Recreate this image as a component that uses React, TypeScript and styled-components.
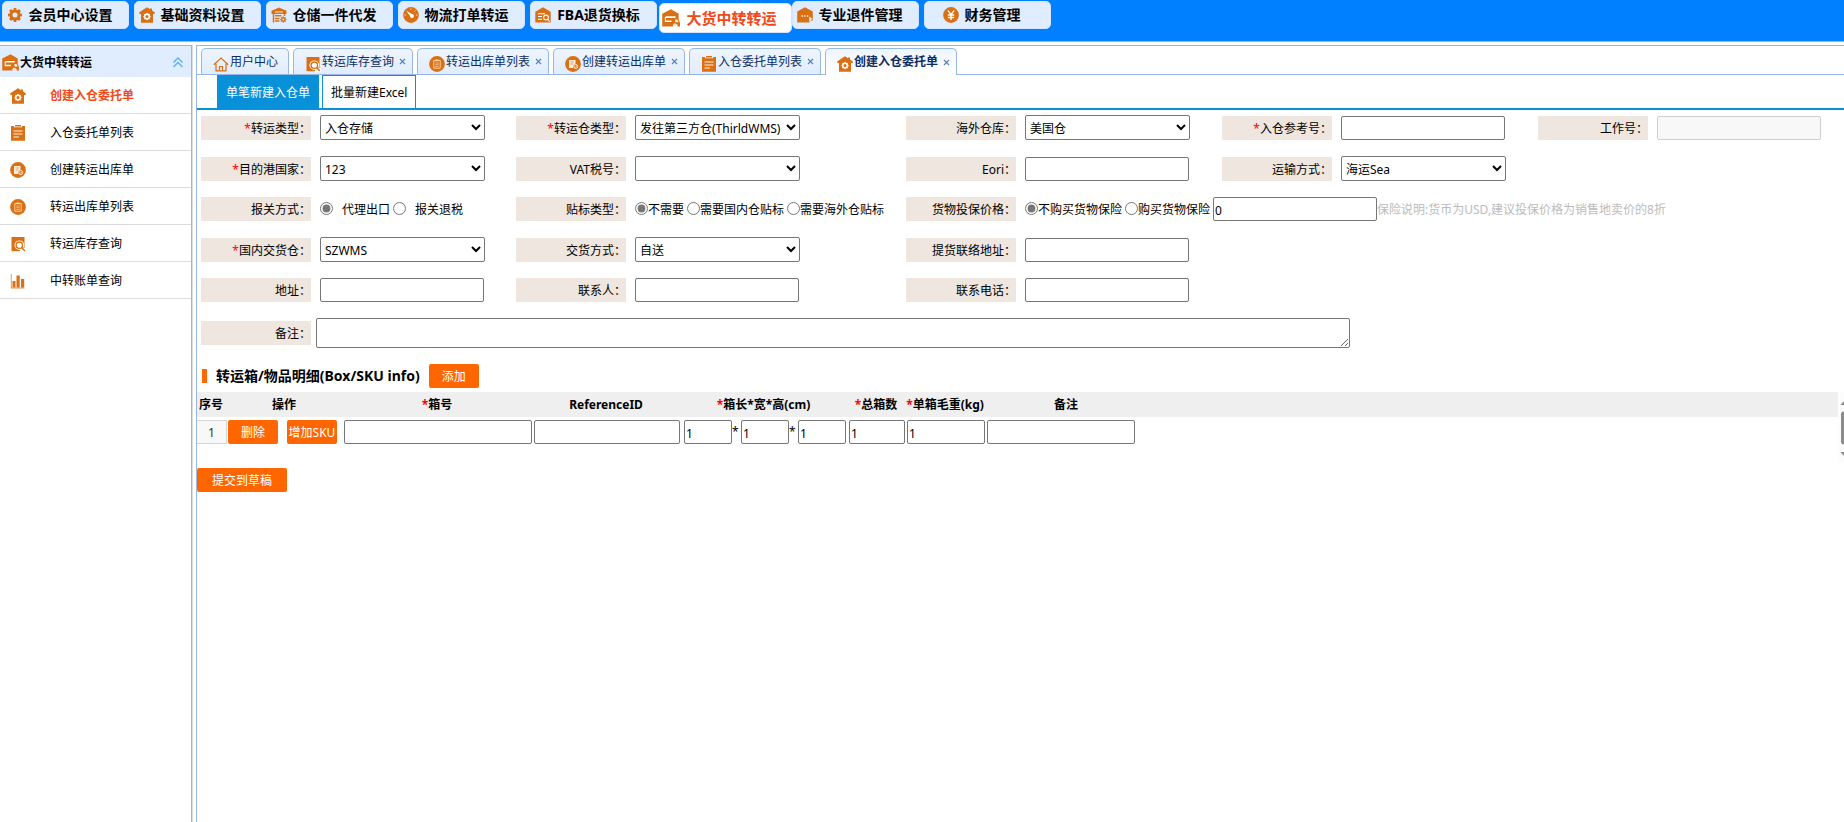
import React from 'react';
import styled, { createGlobalStyle } from 'styled-components';

const colors = {
  brand: '#007fff',
  panel: '#e0ecff',
  line: '#95b8e7',
  icon: '#d97014',
  active: '#f04a1a',
  orange: '#ff6600',
  tab: '#0891d9',
  label: '#eee6df',
  control: '#767676',
};

const GlobalStyle = createGlobalStyle`
  *, *::before, *::after { box-sizing: border-box; }
  body {
    margin: 0;
    background: #fff;
    color: #000;
    font-family: "Noto Sans", "Noto Sans CJK SC", sans-serif;
    font-size: 12px;
    line-height: 16px;
  }
  button, input, select, textarea { font: inherit; color: inherit; margin: 0; }
  a { color: inherit; text-decoration: none; }
`;

/* ---------- icons ---------- */

type IconName =
  | 'gear' | 'houseGear' | 'warehouse' | 'compass' | 'houseSearch' | 'houseTruck'
  | 'houseDots' | 'yen' | 'home' | 'bookSearch' | 'circleClipboard' | 'circleDoc'
  | 'clipboard' | 'chart';

const GEAR_TEETH = [0, 45, 90, 135, 180, 225, 270, 315];

const glyphs: Record<IconName, React.ReactNode> = {
  gear: (
    <>
      <circle cx="8" cy="8" r="4" fill="none" stroke={colors.icon} strokeWidth="3" />
      {GEAR_TEETH.map((a) => (
        <rect key={a} x="6.6" y="1" width="2.8" height="3" fill={colors.icon} transform={`rotate(${a} 8 8)`} />
      ))}
    </>
  ),
  houseGear: (
    <>
      <path d="M8 0.3 0.3 5.200v1.900H2V15.700h12V7.100h1.700V5.200L13 3.500V1.500h-2v.7z" fill={colors.icon} />
      <circle cx="8" cy="9.600" r="2.300" fill="none" stroke="#fff" strokeWidth="1.500" />
      {GEAR_TEETH.map((a) => (
        <rect key={a} x="7.400" y="6" width="1.200" height="1.500" fill="#fff" transform={`rotate(${a} 8 9.600)`} />
      ))}
    </>
  ),
  warehouse: (
    <>
      <path d="M8 .5.500 3.800v3.200h15V3.800z" fill={colors.icon} />
      <path d="M4 5h8" stroke="#fff" strokeWidth=".8" />
      <path d="M2.500 7v8.500M13.500 7v2" stroke={colors.icon} strokeWidth="1.500" />
      <path d="M4 8.800h6.500M4 11.500h4.500M4 14h4.500" stroke={colors.icon} strokeWidth="1.600" />
      <path d="M12.300 9.300v6.400M9.100 12.500h6.400M10 10.200l4.600 4.600M14.600 10.200 10 14.800" stroke={colors.icon} strokeWidth="1" />
      <circle cx="12.300" cy="12.500" r="1.800" fill={colors.panel} stroke={colors.icon} strokeWidth="1.400" />
    </>
  ),
  compass: (
    <>
      <circle cx="8" cy="8" r="7.900" fill={colors.icon} />
      <path d="M3.300 3.800 9.800 7.500 7.800 10z" fill="#fff" />
      <circle cx="9" cy="9" r="1.900" fill="#fff" />
      <path d="M8 1.500v1.300M14.500 8h-1.300M1.500 8h1.300M12.500 3.500l-.9.9" stroke="#fff" strokeWidth=".8" />
    </>
  ),
  houseSearch: (
    <>
      <path d="M8 .2.300 4.800v10.700h15.400V4.800z" fill={colors.icon} />
      <path d="M3 6.800h7M3 9.500h4M3 12.300h4" stroke="#fff" strokeWidth="1.100" />
      <circle cx="11" cy="10.500" r="2.400" fill="none" stroke="#fff" strokeWidth="1.100" />
      <path d="m12.700 12.300 2 2.200" stroke="#fff" strokeWidth="1.100" />
    </>
  ),
  houseTruck: (
    <>
      <path d="M8 .2.200 4.300v11.200h9.600v-1.700h4v1.700H16v-3.300l-1.200-2.700V4.300z" fill={colors.icon} />
      <path d="M3.200 6.500h8.800v1.400H3.200zM3 10.200h5.500v1.300H3zM11.800 9.300h1.700l1.300 2.500h-3z" fill="#fff" />
      <path d="M3 7v4.500" stroke="#fff" strokeWidth=".9" />
      <circle cx="11.500" cy="14.200" r="1.300" fill="#fff" />
      <circle cx="11.500" cy="14.200" r=".5" fill={colors.icon} />
    </>
  ),
  houseDots: (
    <>
      <path d="M8 .2.200 4.500v11h12.300v-2h3.300V4.500z" fill={colors.icon} />
      <path d="M4.500 9h1.300M7.200 9h1.300M9.900 9h1.300" stroke="#fff" strokeWidth="1.400" />
      <path d="m12.300 9.500 3 2.300-3 2.500z" fill="#fff" />
    </>
  ),
  yen: (
    <>
      <circle cx="8" cy="8" r="7.900" fill={colors.icon} />
      <path d="m4.800 3.500 3.200 4 3.200-4M8 7.500v5.500M4.800 8h6.400M4.800 10.500h6.400" fill="none" stroke="#fff" strokeWidth="1.300" />
    </>
  ),
  home: (
    <>
      <path d="M.8 8.800 8 2l7.200 6.800M3 7.500v7.300h10V7.500" fill="none" stroke={colors.icon} strokeWidth="1.200" />
      <path d="M6.500 14.500v-4h3v4" fill="none" stroke={colors.icon} strokeWidth="1.200" />
    </>
  ),
  bookSearch: (
    <>
      <path d="M1.500 1h13v14.200h-13z" fill={colors.icon} />
      <circle cx="9.300" cy="9.200" r="4.800" fill="#fff" />
      <path d="M10 12h6v4h-6z" fill="#fff" />
      <circle cx="9.300" cy="9.200" r="3.200" fill="#fff" stroke={colors.icon} strokeWidth="1.300" />
      <path d="m11.600 11.500 3.200 3.500" stroke={colors.icon} strokeWidth="1.500" />
    </>
  ),
  circleClipboard: (
    <>
      <circle cx="8" cy="8" r="7.900" fill={colors.icon} />
      <path d="M4.800 4.500h6.400v7.700H4.800z" fill="none" stroke="#ffd9b0" strokeWidth=".9" />
      <path d="M6.500 3.500h3v1.700h-3z" fill="#ffd9b0" />
      <path d="M6.300 7h3.400M6.300 8.700h3.400M6.300 10.400h3.400" stroke="#ffd9b0" strokeWidth=".7" />
    </>
  ),
  circleDoc: (
    <>
      <circle cx="8" cy="8" r="7.900" fill={colors.icon} />
      <path d="M4 4h6.500v3.500L8 9.500V12H4z" fill="#ffeedd" />
      <path d="M5.500 6h3.500M5.500 8h2.500" stroke={colors.icon} strokeWidth=".6" />
      <circle cx="10.700" cy="10.500" r="2" fill={colors.icon} stroke="#ffeedd" strokeWidth="1" />
      <path d="m9.700 10.500.8.8 1.300-1.500" fill="none" stroke="#ffeedd" strokeWidth=".8" />
    </>
  ),
  clipboard: (
    <>
      <path d="M1 1h3v1.200h8V1h3v14.800H1z" fill={colors.icon} />
      <path d="M5 0h6v1.500H5z" fill={colors.icon} />
      <path d="M3.500 6h9M3.500 9h9M3.500 12h5.500" stroke="#fff" strokeWidth=".9" />
    </>
  ),
  chart: (
    <>
      <path d="M1.300 1v14" stroke={colors.icon} strokeWidth=".7" />
      <path d="M2.500 8h3v6.500h-3zM6.500 2.500h3.200v12H6.500zM11 6h3.200v8.500H11z" fill={colors.icon} />
      <path d="M1 15h13.500" stroke={colors.icon} strokeWidth=".8" />
    </>
  ),
};

const Svg = styled.svg`
  flex: none;
  display: block;
`;

const Icon = ({ name, size = 16 }: { name: IconName; size?: number }) => (
  <Svg width={size} height={size} viewBox="0 0 16 16" aria-hidden="true">{glyphs[name]}</Svg>
);

/* ---------- page shell ---------- */

const Page = styled.div`
  display: flex;
  flex-direction: column;
  min-height: 100vh;
`;

const TopBar = styled.header`
  background: ${colors.brand};
  border-bottom: 1px solid ${colors.line};
  height: 42px;
`;

const TopNav = styled.nav`
  display: flex;
  gap: 5px;
  padding: 1px 2px;
`;

const NavButton = styled.button<{ $active?: boolean }>`
  display: flex;
  align-items: center;
  justify-content: center;
  gap: 6px;
  flex: none;
  width: ${(p) => (p.$active ? 133 : 127)}px;
  height: ${(p) => (p.$active ? 30 : 28)}px;
  margin: ${(p) => (p.$active ? '2px -5px 0 -3px' : '0')};
  padding: 0 12px 0 0;
  border: 1px solid ${(p) => (p.$active ? '#cfe3ff' : '#d3e5ff')};
  border-radius: 5px;
  background: ${(p) => (p.$active ? '#fff' : colors.panel)};
  color: ${(p) => (p.$active ? colors.active : '#000')};
  font-size: ${(p) => (p.$active ? 15 : 14)}px;
  font-weight: bold;
  line-height: 20px;
  white-space: nowrap;
`;

const Body = styled.div`
  display: flex;
  flex: 1;
  gap: 4px;
  padding-top: 3px;
`;

const Sidebar = styled.aside`
  flex: none;
  width: 192px;
  border: 1px solid ${colors.line};
  border-width: 1px 1px 0 0;
  box-shadow: 1px 0 0 #dcdcdc;
`;

const SidebarTitle = styled.h2`
  display: flex;
  align-items: center;
  gap: 1px;
  height: 31px;
  margin: 0;
  padding: 2px 4px 0 2px;
  background: ${colors.panel};
  font-size: 12px;
`;

const Collapse = styled.button`
  margin-left: auto;
  padding: 0;
  border: 0;
  background: none;
`;

const Menu = styled.ul`
  list-style: none;
  margin: 0;
  padding: 0;
`;

const MenuLink = styled.a<{ $active?: boolean }>`
  display: flex;
  align-items: center;
  gap: 24px;
  height: 37px;
  padding: 2px 0 0 10px;
  border-bottom: 1px solid #dcdcdc;
  color: ${(p) => (p.$active ? colors.active : '#000')};
  font-weight: ${(p) => (p.$active ? 'bold' : 'normal')};
`;

const Main = styled.main`
  flex: 1;
  min-width: 0;
  border: 1px solid ${colors.line};
  border-width: 1px 0 0 1px;
`;

const TabStrip = styled.div`
  display: flex;
  gap: 4px;
  height: 29px;
  padding: 2px 4px 0;
  border-bottom: 1px solid ${colors.line};
`;

const Tab = styled.div<{ $active?: boolean }>`
  display: flex;
  align-items: center;
  flex: none;
  height: ${(p) => (p.$active ? 27 : 26)}px;
  padding: 0 6px 0 11px;
  border: 1px solid ${colors.line};
  border-bottom: 0;
  border-radius: 5px 5px 0 0;
  background: ${(p) =>
    p.$active ? 'linear-gradient(#eff5ff, #fff)' : 'linear-gradient(#eff5ff, #e0ecff)'};
  color: #0e2d5f;
  font-weight: ${(p) => (p.$active ? 'bold' : 'normal')};
  white-space: nowrap;

  svg { margin: 4px 1px 0 0; }
`;

const TabTitle = styled.button`
  display: flex;
  align-items: center;
  padding: 0 4px 0 0;
  border: 0;
  background: none;
  font-weight: inherit;
`;

const TabClose = styled.button`
  display: flex;
  align-items: center;
  justify-content: center;
  width: 8px;
  height: 16px;
  padding: 0;
  border: 0;
  background: none;

  svg { margin: 0; }
`;

const ModeStrip = styled.div`
  display: flex;
  gap: 3px;
  height: 35px;
  padding-left: 20px;
  border-bottom: 2px solid ${colors.tab};
`;

const ModeButton = styled.button<{ $active?: boolean }>`
  padding: 2px 8px 0;
  border: 1px solid ${colors.tab};
  border-bottom: 0;
  background: ${(p) => (p.$active ? colors.tab : '#fff')};
  color: ${(p) => (p.$active ? '#fff' : '#000')};
  white-space: nowrap;
`;

/* ---------- form ---------- */

const FormGrid = styled.div`
  display: grid;
  grid-template-columns: 315px 390px 316px 316px 1fr;
  row-gap: 16px;
  align-items: end;
  padding: 5px 0 0 4px;
`;

const Field = styled.div<{ $column?: number; $wide?: boolean; $top?: boolean }>`
  display: flex;
  align-items: ${(p) => (p.$wide ? 'center' : 'flex-end')};
  gap: ${(p) => (p.$top ? 5 : 9)}px;
  grid-column: ${(p) => (p.$column ? `${p.$column}${p.$wide ? ' / -1' : ''}` : 'auto')};
`;

const labelBox = `
  flex: none;
  width: 110px;
  height: 24px;
  line-height: 26px;
  text-align: right;
  white-space: nowrap;
`;

const FieldLabel = styled.label`
  ${labelBox}
  background: ${colors.label};
`;

const GroupLabel = styled.span`
  ${labelBox}
  background: ${colors.label};
`;

const Star = styled.span`
  color: #f00;
`;

const Input = styled.input<{ $width?: number }>`
  flex: none;
  width: ${(p) => p.$width ?? 164}px;
  height: 24px;
  padding: 2px 1px 0;
  border: 1px solid ${colors.control};
  border-radius: 2px;
  background: #fff;

  &:disabled {
    border-color: #cfcfcf;
    background: #f8f8f8;
  }
`;

const Select = styled.select`
  flex: none;
  width: 165px;
  height: 25px;
  padding: 1px 0 0;
  border: 1px solid ${colors.control};
  border-radius: 2px;
  background: #fff;
`;

const Remark = styled.textarea`
  flex: 0 1 1034px;
  height: 30px;
  padding: 2px;
  border: 1px solid ${colors.control};
  border-radius: 2px;
`;

const RadioGroup = styled.div`
  display: flex;
  align-items: center;
  gap: 3px;
  height: 24px;
  white-space: nowrap;
`;

const RadioLabel = styled.label<{ $gap?: number }>`
  display: flex;
  align-items: center;
  gap: ${(p) => p.$gap ?? 0}px;
  padding-top: 2px;
`;

const Radio = styled.input`
  flex: none;
  width: 13px;
  height: 13px;
  margin-bottom: 4px;
  accent-color: ${colors.control};
`;

const Hint = styled.span`
  margin-left: -3px;
  padding-top: 2px;
  color: #bbb;
`;

const Required = ({ on }: { on?: boolean }) => (on ? <Star>*</Star> : null);

type ControlProps = { id: string; label: string; required?: boolean; column?: number };

const SelectField = ({ id, label, required, column, value }: ControlProps & { value: string }) => (
  <Field $column={column}>
    <FieldLabel htmlFor={id}><Required on={required} />{label}：</FieldLabel>
    <Select id={id} defaultValue={value}><option value={value}>{value}</option></Select>
  </Field>
);

const TextField = ({ id, label, required, column, disabled }: ControlProps & { disabled?: boolean }) => (
  <Field $column={column}>
    <FieldLabel htmlFor={id}><Required on={required} />{label}：</FieldLabel>
    <Input id={id} type="text" disabled={disabled} />
  </Field>
);

const Radios = ({ name, options, gap }: { name: string; options: string[]; gap?: number }) => (
  <>
    {options.map((option, i) => (
      <RadioLabel key={option} $gap={gap}>
        <Radio type="radio" name={name} defaultChecked={i === 0} />
        {option}
      </RadioLabel>
    ))}
  </>
);

/* ---------- box table ---------- */

const SectionTitle = styled.h3`
  display: flex;
  align-items: center;
  gap: 9px;
  margin: 16px 0 4px 5px;
  font-size: 14px;
  line-height: 20px;
`;

const Marker = styled.span`
  width: 5px;
  height: 14px;
  background: ${colors.orange};
`;

const ActionButton = styled.button<{ $width?: number }>`
  width: ${(p) => p.$width ?? 50}px;
  height: 24px;
  padding: 1px 0 0;
  border: 0;
  border-radius: 2px;
  background: ${colors.orange};
  color: #fff;
  font-size: 12px;
  font-weight: normal;
  line-height: 24px;
  white-space: nowrap;
`;

const TableArea = styled.div`
  display: flex;
  align-items: flex-start;
  height: 76px;
`;

const BoxTable = styled.table`
  flex: 1;
  min-width: 0;
  table-layout: fixed;
  border-collapse: collapse;

  th {
    height: 25px;
    padding: 0 2px 0 0;
    background: #efefef;
    white-space: nowrap;
  }
  td {
    padding: 3px 0 0 1px;
    vertical-align: top;
  }
  td:first-child { padding-left: 0; }
`;

const Col = styled.col<{ $width?: number }>`
  width: ${(p) => (p.$width ? `${p.$width}px` : 'auto')};
`;

const RowNumber = styled.div`
  height: 24px;
  border: 1px solid #d6d6d6;
  border-left: 0;
  background: #f8f8f8;
  color: #333;
  line-height: 24px;
  text-align: center;
`;

const Cell = styled.div<{ $gap?: number; $indent?: number }>`
  display: flex;
  align-items: center;
  gap: ${(p) => p.$gap ?? 0}px;
  padding-left: ${(p) => p.$indent ?? 0}px;
`;

const Times = styled.span`
  width: 9px;
  line-height: 24px;
`;

const Submit = styled.div`
  display: flex;
`;

/* ---------- data ---------- */

const navItems: { icon: IconName; text: string; active?: boolean }[] = [
  { icon: 'gear', text: '会员中心设置' },
  { icon: 'houseGear', text: '基础资料设置' },
  { icon: 'warehouse', text: '仓储一件代发' },
  { icon: 'compass', text: '物流打单转运' },
  { icon: 'houseSearch', text: 'FBA退货换标' },
  { icon: 'houseTruck', text: '大货中转转运', active: true },
  { icon: 'houseDots', text: '专业退件管理' },
  { icon: 'yen', text: '财务管理' },
];

const menuItems: { icon: IconName; text: string; active?: boolean }[] = [
  { icon: 'houseGear', text: '创建入仓委托单', active: true },
  { icon: 'clipboard', text: '入仓委托单列表' },
  { icon: 'circleDoc', text: '创建转运出库单' },
  { icon: 'circleClipboard', text: '转运出库单列表' },
  { icon: 'bookSearch', text: '转运库存查询' },
  { icon: 'chart', text: '中转账单查询' },
];

const tabs: { icon: IconName; text: string; active?: boolean; fixed?: boolean }[] = [
  { icon: 'home', text: '用户中心', fixed: true },
  { icon: 'bookSearch', text: '转运库存查询' },
  { icon: 'circleClipboard', text: '转运出库单列表' },
  { icon: 'circleDoc', text: '创建转运出库单' },
  { icon: 'clipboard', text: '入仓委托单列表' },
  { icon: 'houseGear', text: '创建入仓委托单', active: true },
];

const boxColumns: { text: string; width: number; required?: boolean }[] = [
  { text: '序号', width: 30 },
  { text: '操作', width: 116 },
  { text: '箱号', width: 190, required: true },
  { text: 'ReferenceID', width: 148 },
  { text: '箱长*宽*高(cm)', width: 167, required: true },
  { text: '总箱数', width: 58, required: true },
  { text: '单箱毛重(kg)', width: 80, required: true },
  { text: '备注', width: 162 },
];

export default function App() {
  return (
    <Page>
      <GlobalStyle />
      <TopBar>
        <TopNav>
          {navItems.map((item) => (
            <NavButton key={item.text} type="button" $active={item.active}>
              <Icon name={item.icon} size={item.active ? 18 : 16} />
              {item.text}
            </NavButton>
          ))}
        </TopNav>
      </TopBar>

      <Body>
        <Sidebar>
          <SidebarTitle>
            <Icon name="houseTruck" size={17} />
            大货中转转运
            <Collapse type="button" aria-label="收起">
              <Svg width="18" height="16" viewBox="0 0 18 16">
                <path d="M4.500 7.500 9 3l4.500 4.500M4.500 12 9 7.500l4.500 4.500" fill="none" stroke="#5aaef0" strokeWidth="1.300" />
              </Svg>
            </Collapse>
          </SidebarTitle>
          <Menu>
            {menuItems.map((item) => (
              <li key={item.text}>
                <MenuLink href="#" $active={item.active}>
                  <Icon name={item.icon} />
                  {item.text}
                </MenuLink>
              </li>
            ))}
          </Menu>
        </Sidebar>

        <Main>
          <TabStrip>
            {tabs.map((tab) => (
              <Tab key={tab.text} $active={tab.active}>
                <TabTitle type="button">
                  <Icon name={tab.icon} />
                  {tab.text}
                </TabTitle>
                {!tab.fixed && (
                  <TabClose type="button" aria-label="关闭">
                    <Svg width="7" height="7" viewBox="0 0 7 7">
                      <path d="m1 1 5 5M6 1 1 6" stroke="#5c82b8" strokeWidth="1.200" />
                    </Svg>
                  </TabClose>
                )}
              </Tab>
            ))}
          </TabStrip>
          <ModeStrip>
            <ModeButton type="button" $active>单笔新建入仓单</ModeButton>
            <ModeButton type="button">批量新建Excel</ModeButton>
          </ModeStrip>

          <FormGrid>
            <SelectField id="type" label="转运类型" value="入仓存储" required column={1} />
            <SelectField id="whType" label="转运仓类型" value="发往第三方仓(ThirldWMS)" required column={2} />
            <SelectField id="overseas" label="海外仓库" value="美国仓" column={3} />
            <TextField id="refNo" label="入仓参考号" required column={4} />
            <TextField id="jobNo" label="工作号" disabled column={5} />

            <SelectField id="country" label="目的港国家" value="123" required column={1} />
            <SelectField id="vat" label="VAT税号" value="" column={2} />
            <TextField id="eori" label="Eori" column={3} />
            <SelectField id="transport" label="运输方式" value="海运Sea" column={4} />

            <Field $column={1}>
              <GroupLabel>报关方式：</GroupLabel>
              <RadioGroup><Radios name="customs" options={['代理出口', '报关退税']} gap={9} /></RadioGroup>
            </Field>
            <Field $column={2}>
              <GroupLabel>贴标类型：</GroupLabel>
              <RadioGroup><Radios name="labeling" options={['不需要', '需要国内仓贴标', '需要海外仓贴标']} /></RadioGroup>
            </Field>
            <Field $column={3} $wide>
              <GroupLabel>货物投保价格：</GroupLabel>
              <RadioGroup>
                <Radios name="insurance" options={['不购买货物保险', '购买货物保险']} />
                <Input type="text" defaultValue="0" aria-label="投保价格" />
                <Hint>保险说明:货币为USD,建议投保价格为销售地卖价的8折</Hint>
              </RadioGroup>
            </Field>

            <SelectField id="domestic" label="国内交货仓" value="SZWMS" required column={1} />
            <SelectField id="delivery" label="交货方式" value="自送" column={2} />
            <TextField id="pickup" label="提货联络地址" column={3} />

            <TextField id="address" label="地址" column={1} />
            <TextField id="contact" label="联系人" column={2} />
            <TextField id="phone" label="联系电话" column={3} />

            <Field $column={1} $wide $top>
              <FieldLabel htmlFor="remark">备注：</FieldLabel>
              <Remark id="remark" />
            </Field>
          </FormGrid>

          <SectionTitle>
            <Marker />
            转运箱/物品明细(Box/SKU info)
            <ActionButton type="button">添加</ActionButton>
          </SectionTitle>

          <TableArea>
            <BoxTable>
              <colgroup>
                {boxColumns.map((c) => <Col key={c.text} $width={c.width} />)}
                <Col />
              </colgroup>
              <thead>
                <tr>
                  {boxColumns.map((c) => (
                    <th key={c.text} scope="col"><Required on={c.required} />{c.text}</th>
                  ))}
                  <th />
                </tr>
              </thead>
              <tbody>
                <tr>
                  <td><RowNumber>1</RowNumber></td>
                  <td>
                    <Cell $gap={9}>
                      <ActionButton type="button">删除</ActionButton>
                      <ActionButton type="button">增加SKU</ActionButton>
                    </Cell>
                  </td>
                  <td><Input $width={188} type="text" aria-label="箱号" /></td>
                  <td><Input $width={146} type="text" aria-label="ReferenceID" /></td>
                  <td>
                    <Cell $indent={2}>
                      <Input $width={48} type="text" defaultValue="1" aria-label="箱长" />
                      <Times>*</Times>
                      <Input $width={48} type="text" defaultValue="1" aria-label="箱宽" />
                      <Times>*</Times>
                      <Input $width={48} type="text" defaultValue="1" aria-label="箱高" />
                    </Cell>
                  </td>
                  <td><Input $width={56} type="text" defaultValue="1" aria-label="总箱数" /></td>
                  <td><Input $width={78} type="text" defaultValue="1" aria-label="单箱毛重" /></td>
                  <td><Input $width={148} type="text" aria-label="备注" /></td>
                  <td />
                </tr>
              </tbody>
            </BoxTable>
            <Svg width="6" height="71" viewBox="0 0 6 71" aria-hidden="true">
              <path d="M0 0h6v71H0z" fill="#fcfcfc" />
              <path d="M2.500 13 6 9v4zM2.500 60H6v4z" fill="#8a8a8a" />
              <path d="M6 19.500a3 3 0 0 0-3 3v27a3 3 0 0 0 3 3z" fill="#8a8a8a" />
            </Svg>
          </TableArea>

          <Submit>
            <ActionButton type="button" $width={90}>提交到草稿</ActionButton>
          </Submit>
        </Main>
      </Body>
    </Page>
  );
}
